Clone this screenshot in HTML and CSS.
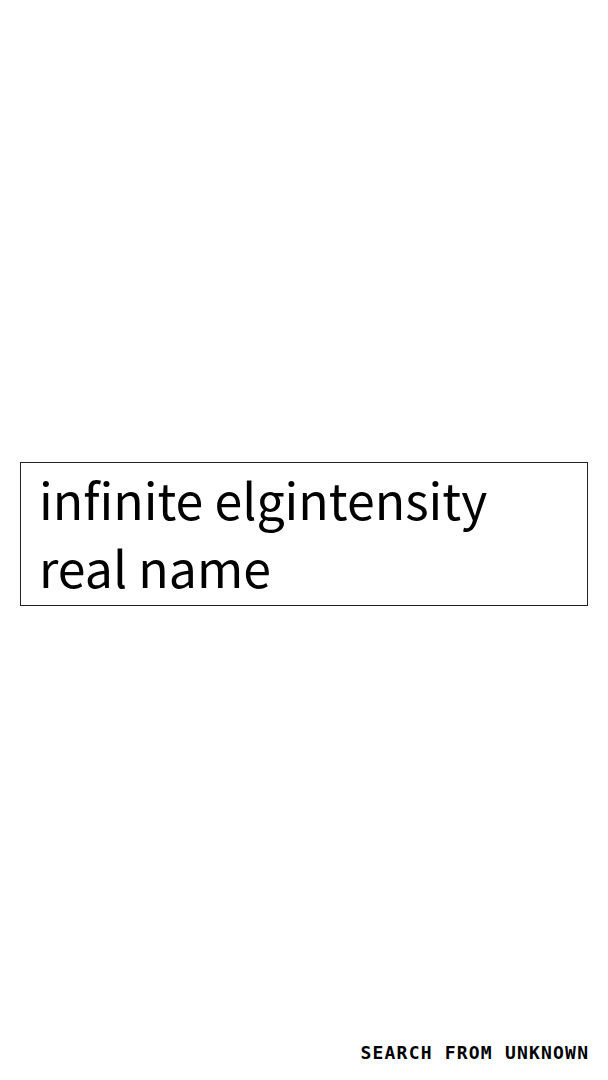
FILE: index.html
```html
<!DOCTYPE html>
<html lang="en">
<head>
    <meta charset="UTF-8">
    <meta name="viewport" content="width=device-width, initial-scale=1.0">
    <title>Search From Unknown</title>
    <link rel="stylesheet" href="styles.css">
</head>
<body>
    <div class="page">
        <main class="stage">
            <div class="query-box">infinite elgintensity real name</div>
        </main>
        <footer class="footer">SEARCH FROM UNKNOWN</footer>
    </div>
</body>
</html>
```

FILE: styles.css
```css
html, body { margin: 0; padding: 0; background: #fff; }
body { font-family: "Noto Sans CJK JP", "Noto Sans", sans-serif; color: #000; }
.page { min-height: 100vh; display: flex; flex-direction: column; padding: 0 20px; box-sizing: border-box; }
.stage { flex: 1; display: flex; align-items: center; padding-top: 27px; }
.query-box { width: 100%; box-sizing: border-box; border: 1px solid #222; padding: 1px 18px 5px; font-size: 50px; line-height: 68px; }
.footer { text-align: right; font-family: "DejaVu Sans Mono", monospace; font-weight: bold; font-size: 18px; letter-spacing: 1.2px; margin-right: -1.2px; line-height: 24px; padding-bottom: 15px; }
```
